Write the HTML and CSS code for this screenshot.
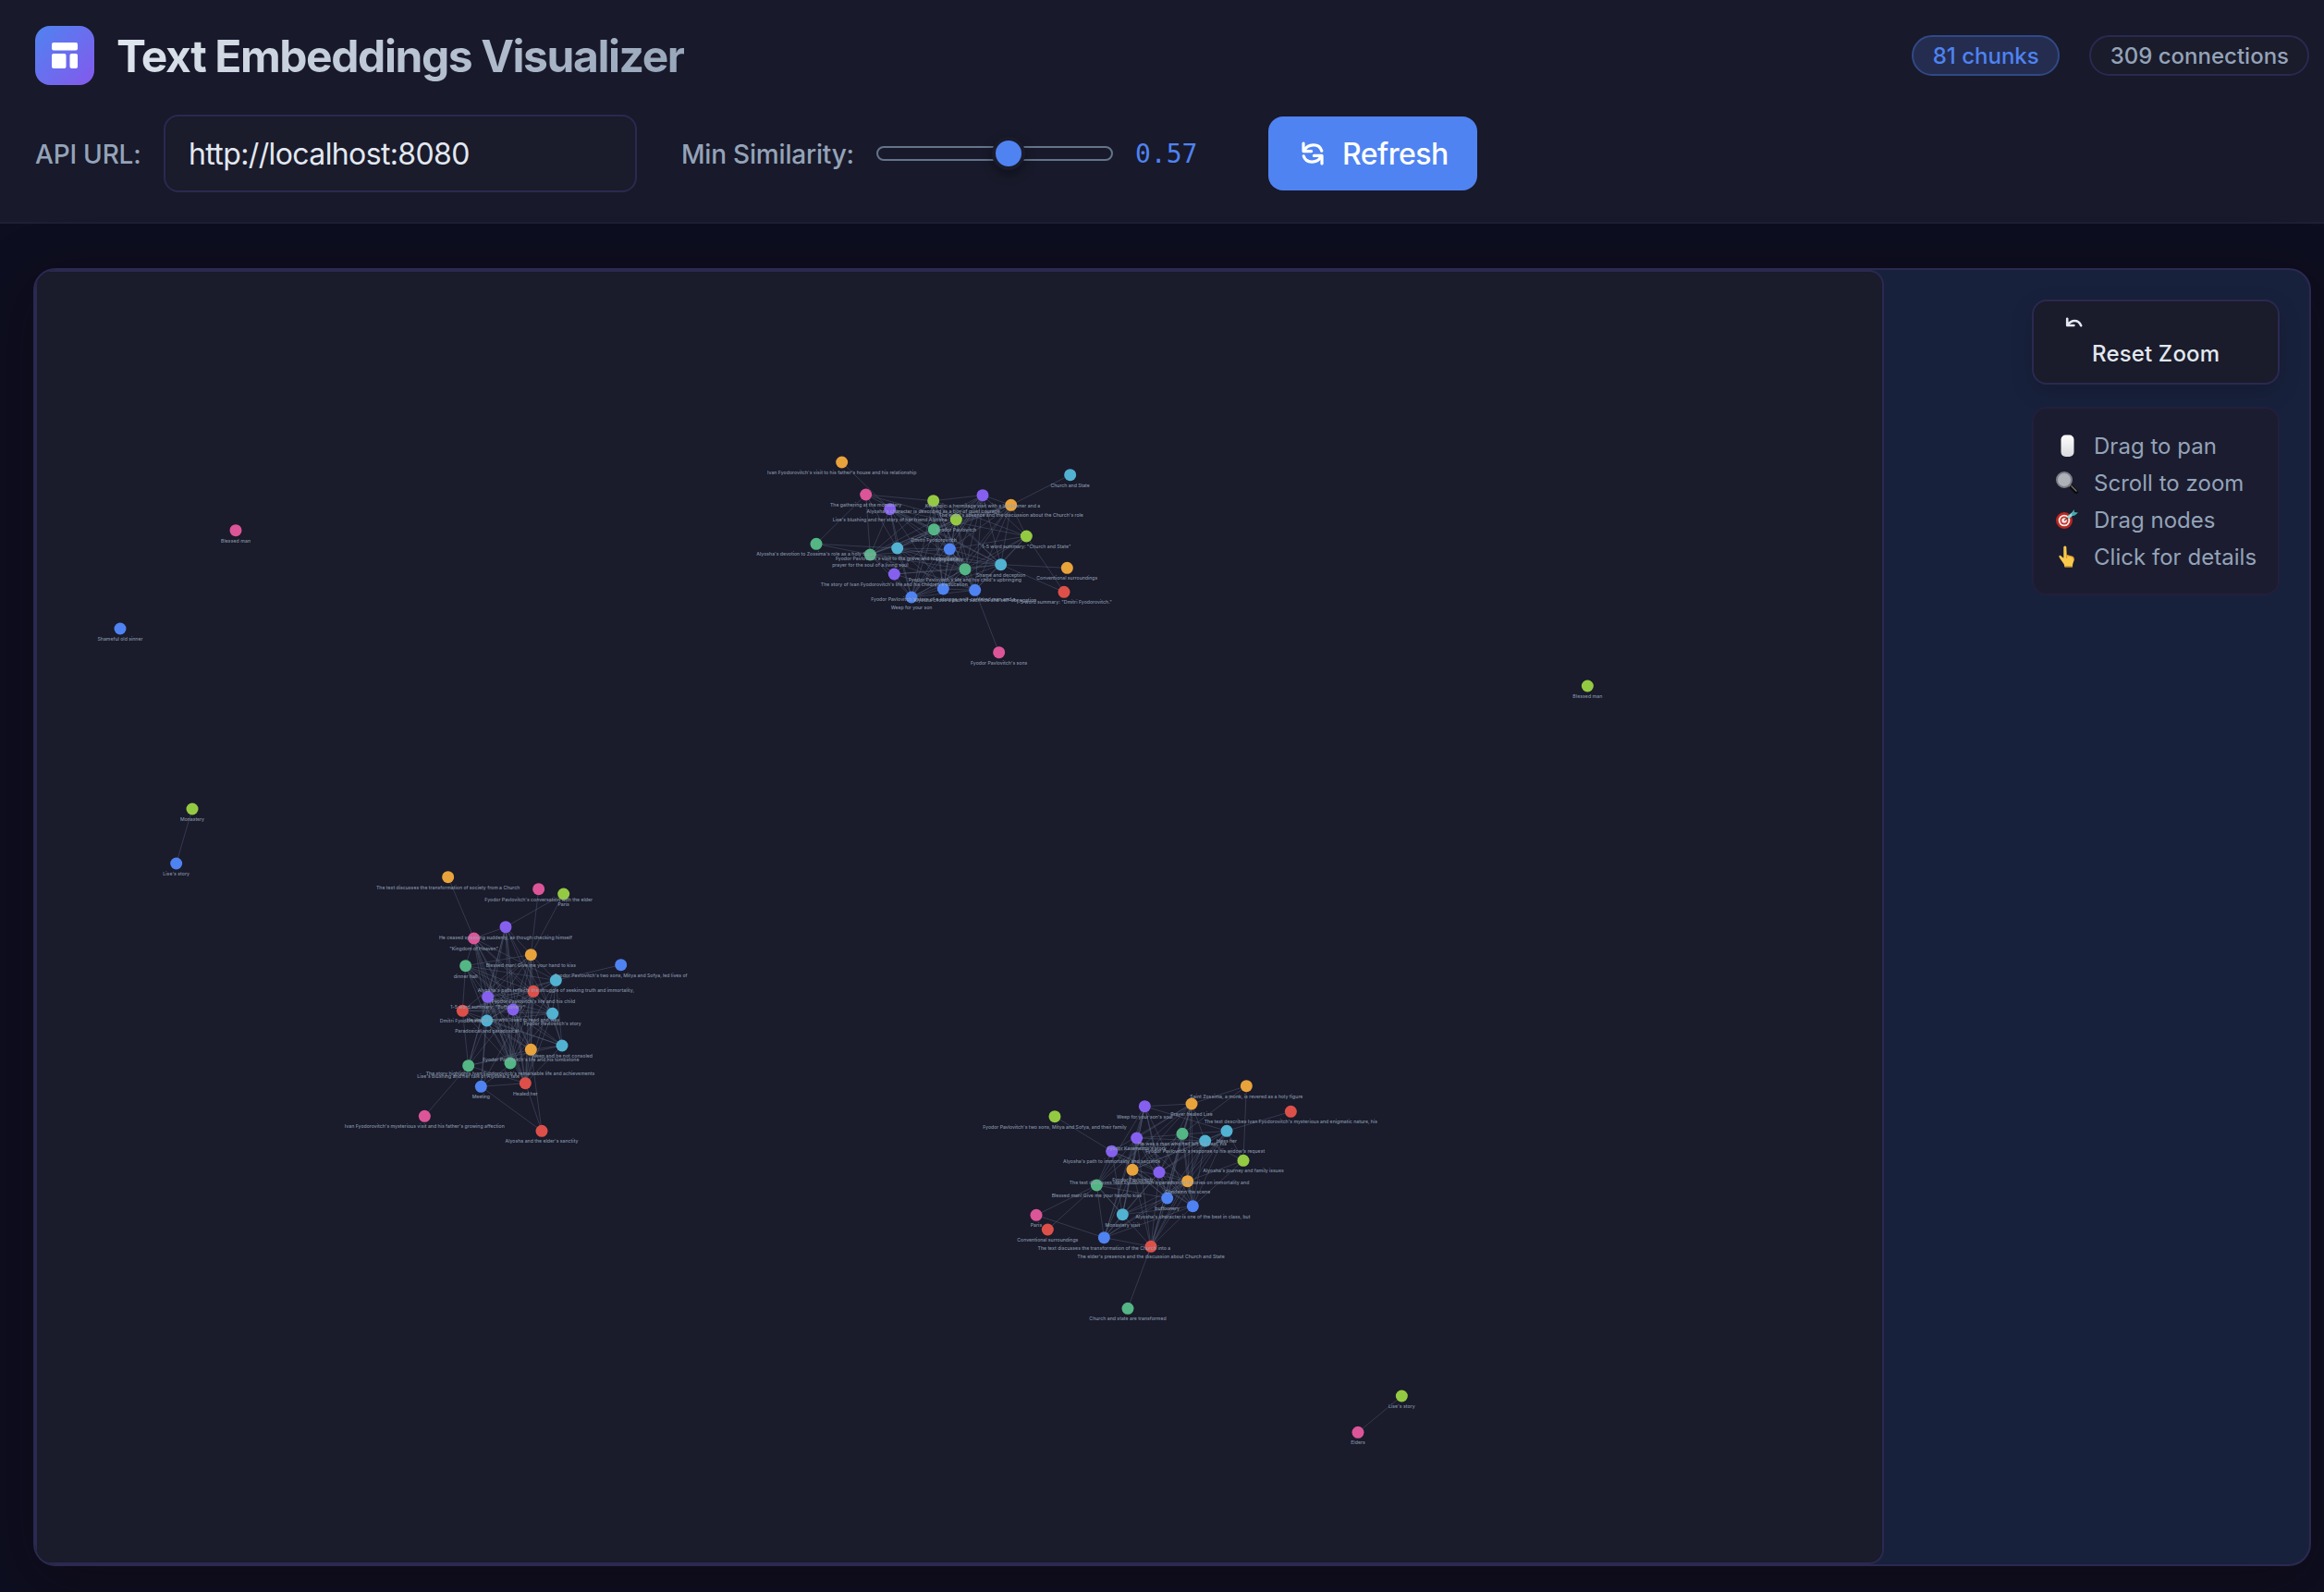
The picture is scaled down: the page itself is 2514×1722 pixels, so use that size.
FILE: index.html
```html
<!DOCTYPE html>
<html lang="en">
<head>
<meta charset="utf-8">
<title>Text Embeddings Visualizer</title>
<link rel="stylesheet" href="styles.css">
</head>
<body>
<header class="header">
  <div class="header-top">
    <div class="brand">
      <span class="logo">
        <svg width="32" height="32" viewBox="0 0 32 32" fill="#fff"><rect x="2" y="2" width="28" height="8.5" rx="2"/><rect x="2" y="14" width="15.5" height="16" rx="2"/><rect x="21.5" y="14" width="8.5" height="16" rx="2"/></svg>
      </span>
      <h1 class="title">Text Embeddings Visualizer</h1>
    </div>
    <div class="stats">
      <span class="pill pill-active">81 chunks</span>
      <span class="pill">309 connections</span>
    </div>
  </div>
  <div class="controls">
    <label class="label label-url">API URL:</label>
    <div class="url-input">http://localhost:8080</div>
    <label class="label label-sim">Min Similarity:</label>
    <div class="slider"><span class="thumb"></span></div>
    <span class="value">0.57</span>
    <button class="refresh">
      <svg width="26" height="28" viewBox="0 0 26 28" fill="none" stroke="#fff" stroke-width="3.2" stroke-linecap="round" stroke-linejoin="round"><path d="M3 3v8.6h8.6"/><path d="M4 10.8C7.5 3.6 20 2.2 22.8 11.2"/><path d="M23 25v-8.6h-8.6"/><path d="M22 17.2C18.500 24.400 6 25.800 3.200 16.800"/></svg>
      <span>Refresh</span>
    </button>
  </div>
</header>
<main class="main">
  <section class="panel">
    <div class="canvas"><svg id="graph" class="graph" viewBox="40 294 1996 1396"></svg></div>
    <aside class="side">
      <button class="reset">
        <svg class="reset-icon" width="20" height="12" viewBox="0 0 20 12" fill="none" stroke="#e2e8f0" stroke-width="2.600" stroke-linecap="round" stroke-linejoin="round"><path d="M2.200 1.800v7.200h7.200M3 8.200C6.500 3 14 2 17.200 9.200"/></svg>
        <span class="reset-text">Reset Zoom</span>
      </button>
      <ul class="legend">
        <li><svg class="emoji" viewBox="0 0 24 24"><defs><linearGradient id="m" x2="0" y2="1"><stop offset="0" stop-color="#fff"/><stop offset="1" stop-color="#d9dade"/></linearGradient></defs><rect x="5.500" y="0.500" width="14" height="23.500" rx="5" fill="url(#m)"/></svg>Drag to pan</li>
        <li><svg class="emoji" viewBox="0 0 24 24"><path d="M15 15l2 2" stroke="#999" stroke-width="3"/><path d="M17 17l5 5" stroke="#0b0b0b" stroke-width="4.500" stroke-linecap="round"/><path d="M16.500 15.500l6 6" stroke="#777" stroke-width="1.300"/><circle cx="9" cy="9" r="8" fill="#aeb1b8" stroke="#7b7f86" stroke-width="2"/></svg>Scroll to zoom</li>
        <li><svg class="emoji" viewBox="0 0 24 24"><circle cx="9" cy="13" r="9" fill="#b9271f"/><circle cx="9" cy="13" r="6.300" fill="#f2e9e7"/><circle cx="9" cy="13" r="4.500" fill="#c4362e"/><circle cx="9" cy="13" r="2.800" fill="#f2e9e7"/><path d="M9 13L16 8" stroke="#7a3434" stroke-width="1.200"/><path d="M13 10l6-5" stroke="#8fd8dc" stroke-width="3"/><path d="M17 5l2.500-4 .5 3 4 .5-3.500 3-3 .5z" fill="#48a9ae"/></svg>Drag nodes</li>
        <li><svg class="emoji" viewBox="0 0 24 24"><path d="M8.300 1.500q1.500-2 3 0l.4 9 6.300 1.700q1.700.7 1.500 4l-1.300 4-.3 3.300H9.500l-.8-3.300L4 13.500q-1.500-3 .8-2.700l3.500 3z" fill="#f9c94c"/><path d="M11.600 14v-3.500l6.500 1.800q1.500 1 1.200 4M9.500 22.500h8.200" fill="none" stroke="#dd9a2c" stroke-width="1.200"/></svg>Click for details</li>
      </ul>
    </aside>
  </section>
</main>
<script src="graph.js"></script>
</body>
</html>
```
FILE: styles.css
```css
* { box-sizing: border-box; }
body {
  margin: 0;
  height: 1722px;
  display: flex;
  flex-direction: column;
  overflow: hidden;
  background: #0d0e1f;
  color: #e2e8f0;
  font-family: Inter, "Liberation Sans", sans-serif;
}
.header {
  flex: none;
  display: flex;
  flex-direction: column;
  gap: 32px;
  padding: 28px 16px 32px 38px;
  background: #18192a;
  border-bottom: 2px solid #1e1e36;
}
.header-top { display: flex; justify-content: space-between; height: 64px; }
.brand { display: flex; align-items: center; gap: 24px; }
.logo {
  width: 64px;
  height: 64px;
  border-radius: 16px;
  display: grid;
  place-items: center;
  background: linear-gradient(135deg, #4f83f1, #8459ec);
}
.title {
  margin: 0;
  padding-top: 2px;
  font-size: 48px;
  line-height: 64px;
  font-weight: 700;
  letter-spacing: -1.44px;
  background: linear-gradient(135deg, #e2e8f0, #94a3b8);
  background-clip: text;
  -webkit-background-clip: text;
  color: transparent;
}
.stats { display: flex; align-items: center; gap: 32px; }
.pill {
  height: 44px;
  padding: 0 20px 0 21px;
  border: 2px solid #2b2950;
  border-radius: 22px;
  background: #1a1b2b;
  color: #94a3b8;
  font-size: 24px;
  line-height: 42px;
  font-weight: 500;
}
.pill-active { background: #242d50; border-color: #304986; color: #4f83f1; }
.controls { display: flex; align-items: center; height: 84px; }
.label { padding-top: 1px; font-size: 28px; font-weight: 500; letter-spacing: -.2px; color: #94a3b8; white-space: nowrap; }
.label-url { width: 139px; }
.url-input {
  width: 512px;
  height: 84px;
  margin-right: 48px;
  padding: 0 25px;
  border: 2px solid #2b2950;
  border-radius: 16px;
  background: #1a1b2b;
  font-size: 32px;
  line-height: 82px;
  letter-spacing: -.62px;
}
.label-sim { width: 211px; }
.slider {
  width: 256px;
  height: 16px;
  padding-left: 123px;
  border: 2px solid #64748b;
  border-radius: 8px;
  display: flex;
  align-items: center;
}
.thumb {
  flex: none;
  width: 36px;
  height: 36px;
  border: 4px solid #1a1b2b;
  border-radius: 50%;
  background: #4f83f1;
  box-shadow: 0 4px 12px rgba(0, 0, 0, .35);
}
.value {
  width: 168px;
  padding-left: 24px;
  font-family: "DejaVu Sans Mono", monospace;
  font-size: 28px;
  color: #4f83f1;
}
.refresh {
  width: 226px;
  height: 80px;
  padding: 0 0 0 35px;
  border: 0;
  border-radius: 16px;
  display: flex;
  align-items: center;
  gap: 19px;
  background: #4f83f1;
  color: #fff;
  font: 500 32px/42px Inter, "Liberation Sans", sans-serif;
  letter-spacing: -.5px;
}
.refresh span { padding-top: 1px; }
.main { flex: 1; padding: 48px 14px 28px 36px; display: flex; }
.panel {
  flex: 1;
  display: flex;
  justify-content: space-between;
  border: 2px solid #2b2950;
  border-radius: 24px;
  overflow: hidden;
  background: #18213c;
  box-shadow: 0 16px 64px rgba(20, 8, 16, .4);
}
.canvas {
  width: 2000px;
  border: 2px solid #2b2950;
  border-radius: 16px;
  background: #1a1b2b;
}
.graph { display: block; width: 1996px; height: 1396px; }
.graph line { stroke: #64748b; stroke-opacity: .36; stroke-width: 3; }
.graph text { font-size: 15.5px; font-weight: 500; text-anchor: middle; fill: #94a3b8; fill-opacity: .9; }
.side { width: 268px; margin: 32px 32px 0 0; display: flex; flex-direction: column; gap: 24px; }
.reset {
  height: 92px;
  padding: 17px 0 0 34px;
  border: 2px solid #2b2950;
  border-radius: 16px;
  display: flex;
  flex-direction: column;
  align-items: flex-start;
  background: #1a1b2b;
  box-shadow: 0 8px 24px rgba(0, 0, 0, .16);
  color: #e2e8f0;
  font: 500 24px/30px Inter, "Liberation Sans", sans-serif;
}
.reset-text { margin: 13px 0 0 29px; letter-spacing: .16px; }
.legend {
  height: 204px;
  margin: 0;
  padding: 20px 24px;
  border: 2px solid #221f3c;
  border-radius: 16px;
  background: #1b1c2f;
  list-style: none;
}
.legend li {
  display: flex;
  align-items: center;
  gap: 17px;
  height: 40px;
  white-space: nowrap;
  color: #94a3b8;
  font-size: 24px;
  letter-spacing: .03px;
}
.emoji { flex: none; width: 24px; height: 24px; }
```
FILE: graph.js
```js
// Node: [color, x, y, label, label width]; coordinates are in thirds of a pixel from the cluster origin.
const C = { o: '#e9a33b', p: '#dc5598', l: '#94ca42', v: '#8560ef', g: '#53b684', c: '#51b2d2', b: '#4f83f1', r: '#dd5049' };

const clusters = [
  { x: 810, y: 470,
    nodes: [
      ['o', 302, 90, "Ivan Fyodorovitch's visit to his father's house and his relationship", 484],
      ['c', 1043, 131, 'Church and State', 127],
      ['p', 380, 195, 'The gathering at the monastery', 232],
      ['v', 458, 242, "Lise's blushing and her story of her friend Alyosha", 371],
      ['l', 599, 215, "Alyosha's character is described as a boy of quiet courage", 433],
      ['v', 759, 197, 'Key topic: a hermitage visit with a landowner and a', 373],
      ['o', 851, 229, "The elder's absence and the discussion about the Church's role", 469],
      ['l', 673, 276, 'Fyodor Pavlovitch', 131],
      ['g', 601, 308, 'Dmitri Fyodorovitch', 147],
      ['l', 901, 330, '1-5 word summary: "Church and State"', 289],
      ['g', 219, 355, "Alyosha's devotion to Zossima's role as a holy figure", 388],
      ['g', 394, 390, 'prayer for the soul of a living soul', 247],
      ['c', 482, 369, "Fyodor Pavlovitch's visit to the grave and his mother's", 400],
      ['b', 652, 372, 'Forgiveness', 88],
      ['c', 818, 422, 'Shame and deception', 160],
      ['o', 1033, 433, 'Conventional surroundings', 198],
      ['g', 702, 437, "Fyodor Pavlovitch's life and his child's upbringing", 366],
      ['v', 472, 453, "The story of Ivan Fyodorovitch's life and his children's education", 477],
      ['r', 1023, 511, '1-5 word summary: "Dmitri Fyodorovitch."', 311],
      ['b', 631, 501, "Fyodor Pavlovitch's story of a strange, self-centered man and a", 469],
      ['b', 734, 505, 'Alyosha chose a path of sacrifice and self-abnegation', 399],
      ['b', 528, 528, 'Weep for your son', 134],
      ['p', 812, 707, "Fyodor Pavlovitch's sons", 184]
    ],
    core: [3, 4, 5, 6, 7, 8, 9, 11, 12, 13, 14, 16, 17, 19, 20, 21],
    skip: ['3-4', '3-5', '3-6', '3-17', '3-20', '4-6', '4-12', '4-17', '5-12', '6-21', '6-17', '7-9', '7-17', '8-9', '8-17', '9-12', '9-16', '9-17', '11-12', '11-19', '12-17', '13-17', '14-19', '16-20', '17-20', '5-7', '9-11', '3-7'],
    extra: [[0, 3], [1, 6], [2, 10], [2, 11], [2, 4], [2, 8], [2, 12], [2, 7], [10, 11], [10, 12], [14, 15], [14, 18], [9, 18], [20, 22]] },
  { x: 360, y: 930,
    nodes: [
      ['o', 374, 56, 'The text discusses the transformation of society from a Church', 466],
      ['p', 668, 95, "Fyodor Pavlovitch's conversation with the elder", 350],
      ['l', 749, 111, 'Paris', 37],
      ['v', 561, 218, 'He ceased speaking suddenly, as though checking himself', 432],
      ['p', 458, 255, '"Kingdom of Heaven"', 159],
      ['o', 643, 308, 'Blessed man! Give me your hand to kiss', 292],
      ['g', 431, 344, 'dinner hall', 78],
      ['b', 935, 341, "Fyodor Pavlovitch's two sons, Mitya and Sofya, led lives of", 431],
      ['c', 724, 391, "Alyosha's path reflects the struggle of seeking truth and immortality,", 508],
      ['r', 651, 427, "Fyodor Pavlovitch's life and his child", 271],
      ['v', 503, 445, '1-5 word summary: "Buffoonery"', 242],
      ['v', 585, 486, 'He was a boy who loved to read and was', 301],
      ['r', 421, 490, 'Dmitri Fyodorovitch', 147],
      ['c', 713, 499, "Fyodor Pavlovitch's story", 187],
      ['c', 500, 522, 'Paradoxical and paradoxical', 206],
      ['c', 744, 603, 'Weep and be not consoled', 198],
      ['o', 643, 616, "Fyodor Pavlovitch's life and his tombstone", 313],
      ['g', 576, 660, "The story highlights Ivan Fyodorovitch's remarkable life and achievements", 548],
      ['g', 440, 668, "Lise's blushing and her tale of Alyosha's fate", 332],
      ['r', 625, 725, 'Healed her', 80],
      ['b', 481, 736, 'Meeting', 58],
      ['p', 298, 832, "Ivan Fyodorovitch's mysterious visit and his father's growing affection", 519],
      ['r', 678, 880, "Alyosha and the elder's sanctity", 237]
    ],
    core: [3, 4, 5, 6, 8, 9, 10, 11, 12, 13, 14, 15, 16, 17, 18, 19],
    skip: ['3-6', '3-8', '3-12', '4-12', '4-18', '4-5', '5-18', '5-13', '6-16', '6-18', '6-17', '8-16', '8-18', '9-18', '10-12', '11-15', '12-14', '13-18', '15-17', '16-17', '17-18', '17-19', '4-15', '9-15', '3-15', '11-14', '12-19', '13-16', '3-16', '8-9'],
    extra: [[0, 4], [1, 5], [2, 5], [2, 3], [7, 8], [18, 21], [20, 22], [16, 22], [19, 22], [19, 20], [16, 20], [14, 20], [10, 20], [9, 20]] },
  { x: 1050, y: 1160,
    nodes: [
      ['o', 895, 44, 'Saint Zossima, a monk, is revered as a holy figure', 366],
      ['o', 717, 102, 'Prayer healed Lise', 137],
      ['v', 565, 110, "Weep for your son's soul", 182],
      ['r', 1039, 127, "The text describes Ivan Fyodorovitch's mysterious and enigmatic nature, his", 562],
      ['l', 273, 143, "Fyodor Pavlovitch's two sons, Mitya and Sofya, and their family", 467],
      ['c', 831, 190, 'bless her', 66],
      ['g', 687, 199, 'He was a man who had left his past, his', 288],
      ['v', 539, 213, "Fyodor Karamazov's story", 192],
      ['c', 761, 222, "Fyodor Pavlovitch's response to his widow's request", 387],
      ['v', 458, 256, "Alyosha's path to immortality and sacrifice", 316],
      ['l', 885, 286, "Alyosha's journey and family issues", 262],
      ['o', 525, 316, 'Fyodor Pavlovitch', 131],
      ['v', 612, 324, "The text discusses Ivan Fyodorovitch's paradoxical theories on immortality and", 584],
      ['o', 704, 353, 'Condemn the scene', 147],
      ['g', 409, 366, 'Blessed man! Give me your hand to kiss', 292],
      ['b', 638, 408, 'buffoonery', 80],
      ['b', 721, 434, "Alyosha's character is one of the best in class, but", 373],
      ['c', 493, 461, 'Monastery visit', 113],
      ['p', 213, 463, 'Paris', 37],
      ['r', 250, 510, 'Conventional surroundings', 198],
      ['b', 433, 536, 'The text discusses the transformation of the Church into a', 431],
      ['r', 585, 565, "The elder's presence and the discussion about Church and State", 478],
      ['g', 510, 766, 'Church and state are transformed', 250]
    ],
    core: [1, 2, 5, 6, 7, 8, 9, 11, 12, 13, 14, 15, 16, 17, 20, 21],
    skip: ['1-5', '2-6', '2-9', '2-8', '5-9', '5-14', '6-7', '6-14', '7-9', '6-9', '8-14', '8-17', '9-11', '11-14', '12-14', '14-16', '14-21', '5-20', '5-17', '1-20', '6-20', '8-20', '12-13', '2-21', '9-21', '11-12', '5-6', '9-20', '15-16', '1-17', '6-17', '2-13'],
    extra: [[0, 1], [0, 6], [0, 10], [3, 5], [5, 10], [4, 9], [14, 18], [14, 19], [18, 20], [21, 22], [10, 16], [10, 13], [8, 10], [14, 17]] },
  { x: 80, y: 550,
    nodes: [
      ['p', 525, 71, 'Blessed man', 96],
      ['b', 150, 390, 'Shameful old sinner', 147],
      ['l', 384, 975, 'Monastery', 78],
      ['b', 332, 1152, "Lise's story", 86]
    ],
    core: [], skip: [], extra: [[2, 3]] },
  { x: 1440, y: 1480,
    nodes: [['l', 229, 90, "Lise's story", 86], ['p', 87, 208, 'Elders', 47]],
    core: [], skip: [], extra: [[0, 1]] },
  { x: 1700, y: 700,
    nodes: [['l', 52, 126, 'Blessed man', 96]],
    core: [], skip: [], extra: [] }
];

const NS = 'http://www.w3.org/2000/svg';
const add = (parent, tag, attrs) => {
  const el = document.createElementNS(NS, tag);
  for (const k in attrs) el.setAttribute(k, attrs[k]);
  parent.appendChild(el);
  return el;
};

const svg = document.getElementById('graph');
for (const cl of clusters) {
  const g = add(svg, 'g', { transform: `translate(${cl.x} ${cl.y}) scale(.33333)` });
  const links = [...cl.extra];
  cl.core.forEach((a, i) => cl.core.slice(i + 1).forEach(b => {
    if (!cl.skip.includes(`${a}-${b}`)) links.push([a, b]);
  }));
  for (const [a, b] of links) {
    const s = cl.nodes[a], t = cl.nodes[b];
    add(g, 'line', { x1: s[1], y1: s[2], x2: t[1], y2: t[2] });
  }
  for (const n of cl.nodes) add(g, 'circle', { cx: n[1], cy: n[2], r: 19.5, fill: C[n[0]] });
  for (const n of cl.nodes) {
    add(g, 'text', { x: n[1], y: n[2] + 39, textLength: n[4] }).textContent = n[3];
  }
}
```
